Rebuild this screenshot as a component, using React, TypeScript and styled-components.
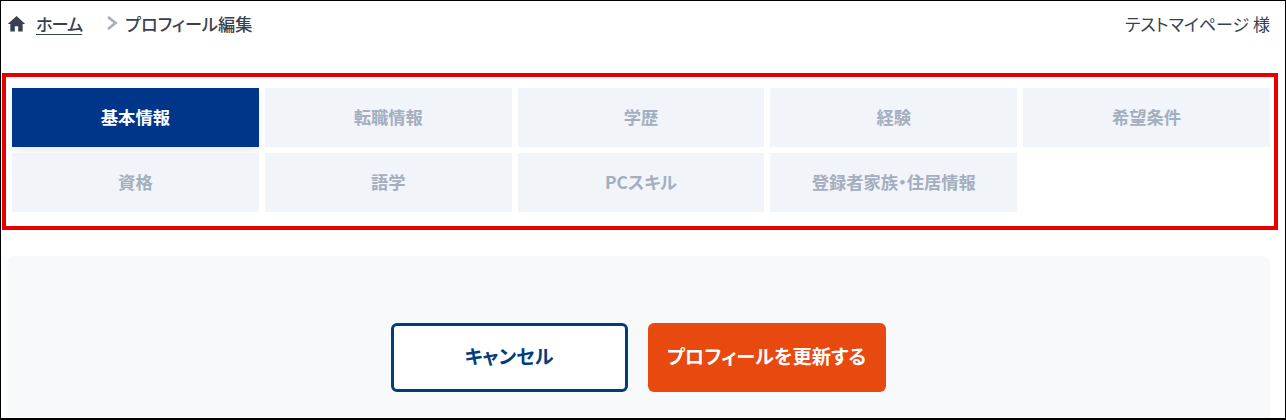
import { createGlobalStyle, styled } from "styled-components";

const GlobalStyle = createGlobalStyle`
  html, body {
    margin: 0;
    padding: 0;
    background: #fff;
  }
  * {
    box-sizing: border-box;
  }
`;

const Page = styled.div`
  width: 1286px;
  height: 420px;
  overflow: hidden;
  border: 1px solid #000;
  border-width: 1px 1px 2px 1px;
  background: #fff;
  color: #374151;
  font-family: "Noto Sans CJK JP", "Noto Sans", sans-serif;
  font-feature-settings: "palt";
`;

const Header = styled.header`
  display: flex;
  align-items: center;
  justify-content: space-between;
  height: 48px;
  padding: 0 15px 4px 6px;
`;

const Crumbs = styled.nav`
  display: flex;
  align-items: center;
  font-size: 17.2px;
  font-weight: 500;
`;

const HomeIcon = styled.svg`
  width: 19px;
  height: 19px;
  margin-right: 10px;
  fill: #374151;
`;

const HomeLink = styled.a`
  color: #374151;
  letter-spacing: -1px;
  text-decoration: underline;
  text-underline-offset: 3px;
`;

const Chevron = styled.svg`
  width: 12px;
  height: 16px;
  margin: 0 7px 0 24px;
  fill: none;
  stroke: #a8afba;
  stroke-width: 2.8;
`;

const UserName = styled.div`
  font-size: 17px;
  font-weight: 400;
`;

const TabFrame = styled.section`
  margin: 24px 7px 0 1px;
  height: 157px;
  padding: 11px 4px 0 6px;
  border: 4px solid #e60000;
`;

const TabGrid = styled.div`
  display: grid;
  grid-template-columns: repeat(5, 1fr);
  grid-auto-rows: 59px;
  gap: 6px;
`;

const Tab = styled.div<{ $active?: boolean }>`
  display: flex;
  align-items: center;
  justify-content: center;
  padding-bottom: 2px;
  font-size: 17.3px;
  font-weight: 700;
  background: ${(props) => (props.$active ? "#00368a" : "#f1f4f9")};
  color: ${(props) => (props.$active ? "#fff" : "#a4aebf")};
  box-shadow: ${(props) => (props.$active ? "0 4px 8px rgba(0, 0, 0, 0.08)" : "none")};
`;

const ActionCard = styled.section`
  display: flex;
  justify-content: center;
  gap: 20px;
  height: 200px;
  margin: 26px 15px 0 6px;
  padding: 67px 2px 0 1px;
  border-radius: 8px;
  background: #f8f9fb;
`;

const Button = styled.button<{ $primary?: boolean }>`
  width: ${(props) => (props.$primary ? "238px" : "237px")};
  height: 69px;
  padding: 0 0 3px;
  border-radius: 6px;
  border: ${(props) => (props.$primary ? "none" : "3px solid #003c7e")};
  background: ${(props) => (props.$primary ? "#e8490f" : "#fff")};
  color: ${(props) => (props.$primary ? "#fff" : "#003c7e")};
  font-family: inherit;
  font-feature-settings: inherit;
  font-size: 19.3px;
  font-weight: 700;
`;

const tabs = [
  "基本情報",
  "転職情報",
  "学歴",
  "経験",
  "希望条件",
  "資格",
  "語学",
  "PCスキル",
  "登録者家族・住居情報",
];

export default function App() {
  return (
    <Page>
      <GlobalStyle />
      <Header>
        <Crumbs>
          <HomeIcon viewBox="0 0 24 24">
            <path d="M12 2.5 1 12.6h3.2V22h5.7v-6.4h4.2V22h5.7v-9.4H23z" />
          </HomeIcon>
          <HomeLink>ホーム</HomeLink>
          <Chevron viewBox="0 0 12 16">
            <path d="M2 2l7.5 6L2 14" />
          </Chevron>
          プロフィール編集
        </Crumbs>
        <UserName>テストマイページ 様</UserName>
      </Header>
      <TabFrame>
        <TabGrid>
          {tabs.map((tab, i) => (
            <Tab key={tab} $active={i === 0}>
              {tab}
            </Tab>
          ))}
        </TabGrid>
      </TabFrame>
      <ActionCard>
        <Button>キャンセル</Button>
        <Button $primary>プロフィールを更新する</Button>
      </ActionCard>
    </Page>
  );
}
